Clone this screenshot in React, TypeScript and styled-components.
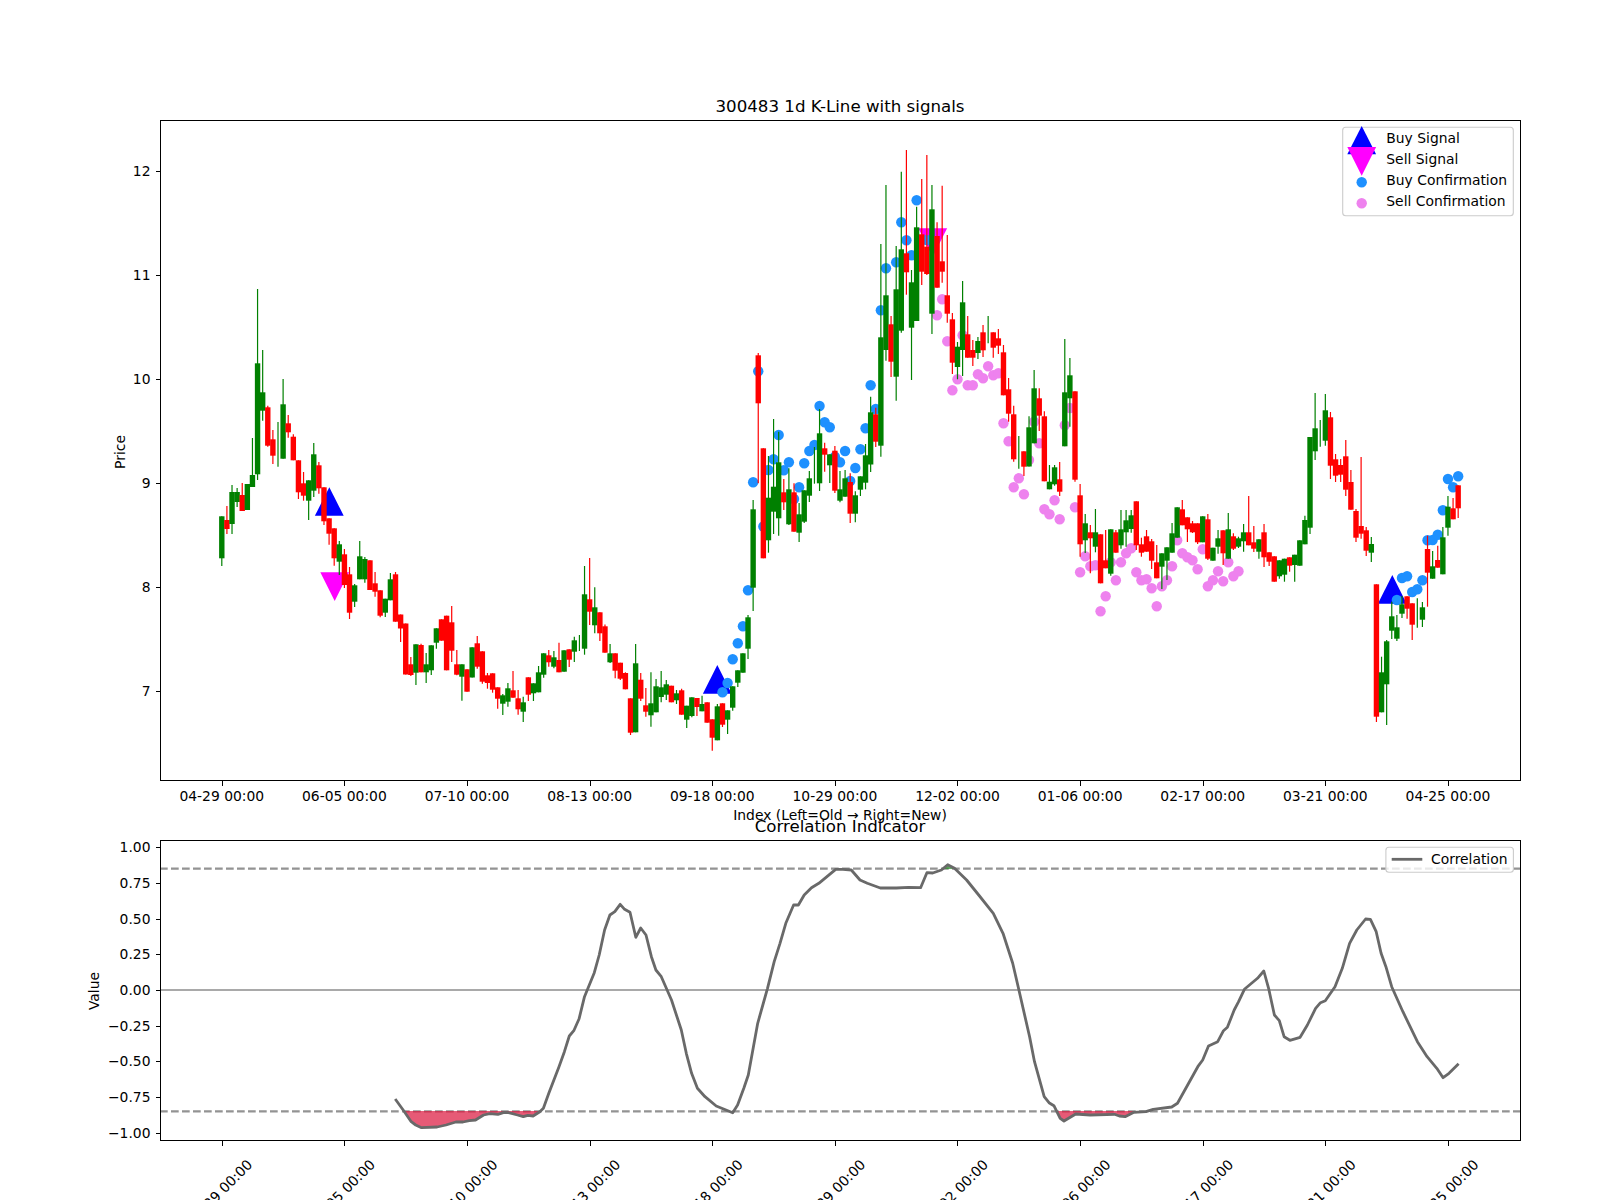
import React from 'react';
import styled, { createGlobalStyle } from 'styled-components';

const GlobalStyle = createGlobalStyle`
  html, body {
    margin: 0;
    padding: 0;
    height: 1200px;
    overflow: hidden;
    background: #ffffff;
  }
`;

const Page = styled.main`
  width: 1600px;
  height: 1200px;
  overflow: hidden;
`;

const Figure = styled.svg`
  display: block;
  width: 1600px;
  height: 1200px;
  font-family: 'DejaVu Sans', 'Liberation Sans', sans-serif;
`;

const Spine = styled.rect`
  fill: none;
  stroke: #000000;
  stroke-width: 1px;
  shape-rendering: crispEdges;
`;

const TickMark = styled.line`
  stroke: #000000;
  stroke-width: 1px;
  shape-rendering: crispEdges;
`;

const Label = styled.text<{ $size?: number; $anchor?: string }>`
  fill: #000000;
  font-size: ${({ $size }) => $size ?? 13.89}px;
  text-anchor: ${({ $anchor }) => $anchor ?? 'middle'};
`;

const Wick = styled.line<{ $tone: string }>`
  stroke: ${({ $tone }) => ($tone === 'r' ? '#ff0000' : '#008000')};
  stroke-width: 1.2px;
`;

const Body = styled.rect<{ $tone: string }>`
  fill: ${({ $tone }) => ($tone === 'r' ? '#ff0000' : '#008000')};
`;

const Dot = styled.circle<{ $kind: 'buy' | 'sell' }>`
  fill: ${({ $kind }) => ($kind === 'buy' ? '#1e90ff' : '#ee82ee')};
`;

const SignalMark = styled.polygon<{ $kind: 'buy' | 'sell' }>`
  fill: ${({ $kind }) => ($kind === 'buy' ? '#0000ff' : '#ff00ff')};
`;

const LegendBox = styled.rect`
  fill: #ffffff;
  fill-opacity: 0.8;
  stroke: #cccccc;
  stroke-width: 1.11px;
`;

const CorrLine = styled.path`
  fill: none;
  stroke: #696969;
  stroke-width: 2.8px;
  stroke-linejoin: round;
`;

const CorrFill = styled.path<{ $tone: string }>`
  fill: ${({ $tone }) => $tone};
  fill-opacity: 0.7;
`;

const LegendLine = styled.line`
  stroke: #696969;
  stroke-width: 2.8px;
`;

const LevelLine = styled.line`
  stroke: #939393;
  stroke-width: 2.08px;
  stroke-dasharray: 7.7 3.3;
`;

const ZeroLine = styled.line`
  stroke: #a9a9a9;
  stroke-width: 2.1px;
`;

const indexX = (i: number) => 221.8 + 5.109 * i;
const priceY = (p: number) => 691.3 - (p - 7) * 104;
const corrY = (v: number) => 990 - 142.8 * v;
const snap = (v: number) => Math.round(v) + 0.5;

// tone, body top, body bottom, wick top, wick bottom (pixel rows read off the chart)
type Candle = [string, number, number, number, number];

const candles: Candle[] = [
  ['g', 516.3, 558.3, 516.3, 566], ['r', 520, 529, 506, 534], ['g', 492, 524, 485, 534], ['g', 492, 502, 488, 507],
  ['r', 495, 511, 483, 511], ['g', 484, 510, 484, 510], ['g', 475, 487, 438, 487], ['g', 363.3, 474.3, 289, 480],
  ['g', 392.3, 410.7, 350, 420.7], ['r', 407.3, 445.7, 405.7, 446.7], ['r', 439.3, 455.7, 430, 464], ['g', 445, 445, 422, 466.7],
  ['g', 404.3, 458.7, 379, 458.7], ['r', 423.3, 432.3, 415, 437.7], ['r', 436.7, 460.3, 434.3, 460.3], ['r', 460.3, 492.3, 460.3, 499],
  ['r', 483.3, 495.7, 472, 500.7], ['g', 480.3, 500.7, 480.3, 520], ['g', 454.3, 490.7, 443, 497], ['r', 465.3, 488.3, 462, 493.7],
  ['r', 487.3, 521.3, 487.3, 525], ['r', 518.3, 533.7, 518.3, 544.7], ['r', 528.3, 558.3, 528.3, 565.7], ['g', 544.3, 561.7, 541, 575],
  ['r', 554.3, 585, 549, 588], ['r', 574.3, 612.7, 567, 619], ['g', 585.3, 601.7, 584, 607], ['g', 556.3, 579.3, 541, 579.3],
  ['g', 559, 579.3, 557, 582.7], ['r', 560.3, 590, 560.3, 590], ['r', 583.3, 591.7, 572, 596.7], ['r', 590.3, 615.7, 590.3, 617.3],
  ['g', 598.7, 612.7, 598.7, 617], ['g', 579.3, 600.3, 573, 600.3], ['r', 574.3, 621.7, 572, 621.7], ['r', 614.5, 628.5, 614.5, 642],
  ['r', 623.5, 674.5, 623.5, 674.5], ['r', 664.3, 675, 657, 676], ['g', 644.3, 672.7, 644.3, 685], ['r', 645, 672.3, 643.7, 672.3],
  ['g', 664.3, 672.3, 653, 683], ['g', 645.3, 670.3, 645.3, 675], ['g', 628.3, 642.7, 628.3, 648.7], ['r', 619.3, 640.7, 619.3, 640.7],
  ['r', 615.7, 670.3, 615.7, 670.3], ['r', 622.3, 650.7, 606, 662], ['r', 664.3, 674.7, 650, 675.3], ['g', 664.3, 676.7, 664.3, 700.7],
  ['r', 669.3, 691.7, 669.3, 691.7], ['g', 647.3, 677.5, 647.3, 677.5], ['r', 643.3, 666.7, 636, 668.7], ['r', 651.3, 681.7, 651.3, 683.7],
  ['r', 675.3, 683, 673, 688.7], ['r', 673.3, 689.7, 673.3, 692.7], ['r', 687.3, 698.7, 687.3, 708.7], ['g', 695.3, 703.7, 694, 715],
  ['g', 688.3, 701.7, 683, 706.7], ['r', 690.3, 697.7, 671, 697.7], ['r', 698.3, 709.3, 690, 714.7], ['g', 702.3, 711.7, 696.7, 722],
  ['r', 677.3, 694.7, 677.3, 701], ['g', 683.3, 693.3, 683.3, 701], ['g', 672.3, 692.3, 666, 692.3], ['g', 653.3, 674.7, 653.3, 677.7],
  ['r', 655.3, 662.3, 650, 666.7], ['g', 657.3, 666.7, 651, 668.3], ['r', 660, 672.3, 642.7, 672.3], ['g', 650.3, 671.7, 650.3, 671.7],
  ['r', 649.3, 659.7, 649.3, 667], ['g', 640.3, 651.7, 636.7, 662], ['g', 645, 645, 635, 651], ['g', 594.3, 648.7, 566, 654.7],
  ['r', 599.3, 611.7, 558, 625], ['g', 607.3, 625.3, 587.3, 633.3], ['r', 612.3, 633.3, 612.3, 641], ['r', 626.3, 652.7, 624.5, 652.7],
  ['g', 653.3, 662.3, 644, 663], ['r', 653.3, 670.7, 653.3, 678.3], ['r', 662.7, 678.7, 662.7, 680], ['r', 673, 689.3, 672.3, 689.3],
  ['r', 698.3, 732.7, 698.3, 735], ['g', 663.3, 732.3, 644, 732.3], ['r', 679.7, 698.7, 673, 701], ['r', 705.3, 711.7, 688, 716.7],
  ['g', 703.3, 715.3, 672.3, 726.7], ['g', 686.3, 712.3, 679, 712.3], ['g', 687.3, 697, 671, 702.3], ['g', 684.3, 694.7, 680, 700],
  ['r', 685.7, 702.3, 685.7, 702.3], ['g', 693.3, 700.3, 690, 704], ['r', 690.3, 714.7, 688.7, 714.7], ['g', 705.7, 719.7, 705.7, 728],
  ['g', 697.3, 716, 697.3, 717.3], ['r', 698, 707, 698, 716], ['g', 704, 711.3, 695.7, 711.3], ['r', 702.3, 722.7, 702.3, 722.7],
  ['r', 719.3, 737.7, 719.3, 750.7], ['g', 706.3, 740.3, 704, 740.3], ['r', 703.3, 724.7, 703.3, 727], ['g', 710.3, 719.7, 710.3, 734],
  ['g', 686.3, 707.7, 686.3, 710.7], ['g', 670.3, 682.7, 670.3, 687], ['g', 653.3, 672.7, 653.3, 672.7], ['g', 617.3, 648.7, 615, 659],
  ['g', 509.3, 587.7, 500, 611], ['r', 355.3, 403.3, 353, 483.3], ['r', 448.3, 558.3, 448.3, 558.3], ['g', 497.7, 540.3, 456, 552.7],
  ['g', 486.7, 511.7, 419, 534], ['g', 462.3, 518.3, 431.7, 535.7], ['r', 492.3, 502.3, 479, 510], ['g', 489.3, 524.3, 468.3, 525],
  ['r', 492.3, 531.7, 483.3, 531.7], ['g', 514.3, 532.7, 503, 542], ['g', 490.3, 521.7, 490.3, 523], ['g', 478.3, 495.7, 471, 502],
  ['g', 465, 465, 447, 483.7], ['g', 433.3, 483.3, 409, 491], ['r', 448.3, 454.7, 442.7, 471.7], ['g', 454.3, 465.3, 454.3, 483],
  ['r', 450.7, 490.7, 446, 493], ['g', 489.3, 500.7, 471, 502.3], ['g', 478.3, 496.7, 470, 496.7], ['r', 482, 513.7, 473.3, 523],
  ['g', 495.3, 513.7, 491.3, 522.3], ['g', 476.3, 489.7, 476.3, 496], ['g', 455.3, 482.7, 444, 489.3], ['g', 412.3, 464.5, 396.7, 472],
  ['r', 414.3, 441.7, 407.7, 447], ['g', 337.3, 445.7, 244, 456.7], ['g', 295.3, 350, 185, 360.7], ['r', 324.3, 361.7, 316, 377],
  ['g', 289.3, 376.7, 246, 400.7], ['g', 249.3, 330.7, 171.7, 332.7], ['r', 253.3, 272.3, 150, 294.7], ['g', 282.3, 327.7, 270, 380],
  ['g', 227.3, 321, 206.7, 321], ['r', 234.3, 271.7, 179, 285], ['r', 246.7, 274, 155, 275], ['g', 209.3, 313.7, 185, 334],
  ['r', 236, 287.7, 222.3, 287.7], ['r', 261.3, 271.7, 185.7, 282.7], ['r', 295.3, 313.7, 235, 322.7], ['r', 319.3, 362.7, 313, 374],
  ['g', 346.7, 367, 342, 379.3], ['g', 302.3, 350, 281, 376], ['r', 334.3, 357.7, 316, 357.7], ['r', 350, 357.7, 340, 366],
  ['g', 341, 353, 337, 359], ['r', 332.3, 350.3, 325, 357], ['g', 330, 330, 316, 343.3], ['r', 332.3, 347.7, 332.3, 357.7],
  ['r', 338.3, 345.7, 329, 354], ['r', 352.3, 395.3, 345, 395.3], ['r', 389.3, 413.7, 378, 421.7], ['r', 414.3, 459.3, 405.7, 461.7],
  ['g', 450, 450, 436, 468.7], ['r', 451.3, 466.7, 451.3, 476], ['g', 427.3, 466.5, 416.3, 466.5], ['g', 388.3, 443.3, 370, 443.3],
  ['r', 398.3, 415.7, 388.3, 431], ['r', 416.3, 481.3, 411.3, 481.3], ['g', 481.7, 489.3, 465, 489.3], ['g', 467.3, 484.3, 465, 485.7],
  ['r', 479.3, 491.7, 462, 496], ['g', 392.3, 446.3, 339, 446.3], ['g', 375.3, 398.3, 358, 426.7], ['r', 391.3, 479.7, 391.3, 481.7],
  ['r', 495.3, 544.3, 484, 556.7], ['g', 523.3, 540.3, 514, 553], ['r', 532.3, 538.3, 525, 573.3], ['g', 532.3, 546.7, 509, 552.3],
  ['r', 534.3, 583.3, 534.3, 583.3], ['r', 560.3, 568.3, 530, 568.3], ['g', 529.3, 573.7, 529.3, 575.7], ['r', 532.3, 552.7, 530, 552.7],
  ['g', 529.3, 545.3, 510, 548.7], ['g', 520.3, 532.3, 510, 546.7], ['g', 515.3, 529, 510, 532.7], ['r', 501.3, 545.3, 501.3, 550],
  ['r', 544.3, 552.7, 537.7, 556.7], ['r', 536.3, 551.7, 530, 551.7], ['r', 541.3, 560.7, 539, 569], ['r', 562.3, 578.3, 545, 578.3],
  ['g', 553.3, 566.7, 553.3, 589], ['g', 547.3, 560.7, 547.3, 580], ['g', 533.3, 552.7, 523, 552.7], ['g', 507.3, 537.7, 507.3, 537.7],
  ['r', 509.3, 525.3, 500, 525.3], ['r', 517.3, 529.3, 517.3, 542], ['r', 523.3, 532.3, 521, 533], ['r', 523.3, 542.3, 523.3, 544],
  ['g', 516.3, 542.3, 516.3, 542.3], ['r', 519.3, 558.7, 514, 560], ['g', 547.7, 560.7, 547.7, 560.7], ['g', 538.3, 546.7, 530, 553.7],
  ['r', 530.3, 553.3, 530.3, 565], ['g', 529.3, 558.7, 513, 558.7], ['r', 536.3, 548.7, 533.3, 550], ['g', 538.3, 546.7, 536.7, 548],
  ['g', 532.3, 541.3, 524, 551.7], ['r', 532.3, 545.3, 496, 545.3], ['r', 542.3, 548.7, 526, 552], ['g', 539.3, 551.7, 539.3, 558.7],
  ['r', 532.3, 557.3, 524, 567], ['r', 552.3, 561.7, 552.3, 566], ['r', 556.3, 581.7, 556.3, 581.7], ['g', 560.3, 576.3, 560.3, 578.7],
  ['g', 558.7, 574.7, 558.7, 581.7], ['r', 557.3, 565.7, 557.3, 571.7], ['g', 554.7, 565, 554.7, 581.7], ['g', 540.3, 565.7, 540.3, 565.7],
  ['g', 520, 544.3, 515.7, 544.3], ['g', 437, 527.7, 437, 534], ['g', 428.3, 451.3, 393, 460], ['g', 435, 435, 420, 446.7],
  ['g', 410.3, 440.7, 394, 445.7], ['r', 417.3, 465.7, 412, 479], ['r', 459.3, 475.7, 454, 482], ['r', 465, 474.7, 459, 482],
  ['r', 456.3, 489.7, 440, 496], ['r', 482, 509.7, 470, 509.7], ['r', 511, 537.7, 509, 542], ['r', 526, 533.7, 457, 538.7],
  ['r', 530.3, 550.7, 527, 556], ['g', 544, 552.7, 537, 562], ['r', 584.3, 716.7, 584.3, 722], ['g', 672.3, 712.3, 656.7, 712.3],
  ['g', 641.3, 684.3, 640, 725], ['g', 616.3, 630.7, 601.7, 639], ['g', 627.3, 638.7, 615, 641], ['g', 604.3, 613.7, 596, 618],
  ['r', 596.3, 608.7, 596.3, 618.7], ['r', 603.3, 624.7, 603.3, 640], ['g', 610, 610, 598.3, 627.7], ['g', 607.3, 619.7, 602, 627],
  ['r', 549, 572.7, 535.7, 606.7], ['g', 566.3, 578.7, 551, 578.7], ['r', 560, 567.7, 545.7, 567.7], ['g', 537.3, 574.3, 527, 574.3],
  ['g', 506.7, 527.7, 496, 535.7], ['r', 508.3, 519.3, 498, 519.3], ['r', 485.3, 508.3, 485.3, 518],
];

const buyDots: [number, number][] = [
  [98, 692.3], [99, 683], [100, 659.3], [101, 643.3], [102, 626.3], [103, 590.3], [104, 482.3], [105, 371.3], [106, 526.5], [107, 470],
  [108, 459.3], [109, 435], [110, 470.3], [111, 462.3], [112, 499], [113, 487.3], [114, 463.3], [115, 451], [116, 445],
  [117, 406], [118, 422.3], [119, 427.3], [120, 456.7], [121, 462.3], [122, 451], [123, 481], [124, 468], [125, 449.3],
  [126, 428.3], [127, 385.3], [128, 409], [129, 310.3], [130, 268.3], [132, 262.3], [133, 222.3], [134, 240.3], [135, 255.3],
  [136, 200.3], [138, 240], [230, 600], [231, 578], [232, 576.3], [233, 592], [234, 589.3], [235, 580.3], [236, 540.3],
  [237, 540], [238, 534.7], [239, 510.3], [240, 479], [241, 487.3], [242, 476.3],
];

const sellDots: [number, number][] = [
  [140, 315.3], [141, 299.3], [142, 341.3], [143, 390.3], [144, 379.3], [145, 335.3], [146, 385.3], [147, 385.3], [148, 374.3],
  [149, 378.3], [150, 366.3], [151, 375.3], [152, 373.3], [153, 423.3], [154, 441.3], [155, 487.3], [156, 478.3], [157, 494.2],
  [158, 460], [159, 421.7], [160, 443.3], [161, 509.3], [162, 514.3], [163, 500.3], [164, 519.3], [165, 425.3], [166, 408],
  [167, 507.3], [168, 572.3], [169, 556.3], [170, 566.3], [171, 565.3], [172, 611.3], [173, 596.3], [174, 562.3], [175, 580.3],
  [176, 562.3], [177, 553.3], [178, 548.3], [179, 572.3], [180, 580.3], [181, 579.3], [182, 588.3], [183, 606.3], [184, 586.3],
  [185, 580.3], [186, 566.3], [187, 540.3], [188, 553.3], [189, 557.3], [190, 560.3], [191, 569.3], [192, 549.3], [193, 586.3],
  [194, 580.3], [195, 571.3], [196, 581.3], [197, 562.3], [198, 576.3], [199, 571.3],
];

// apex x, base row, apex row of each signal marker
const buySignals = [[329.3, 515.7, 487.3], [717.3, 693.7, 665], [1392.3, 603.7, 575]];
const sellSignals = [[334.7, 572.3, 601], [932.7, 228.3, 257]];

const corrPoints: [number, number][] = [
  [395.2, 1099], [403.7, 1110.7], [411.2, 1121.7], [415.7, 1125], [421.5, 1127.7], [437.1, 1127], [446, 1125], [455.9, 1122],
  [463, 1122], [469.3, 1120.7], [475.5, 1120], [483.6, 1115], [489.8, 1113.7], [497.9, 1114.3], [504.1, 1112.3], [508.6, 1112.7],
  [517.5, 1115], [523.3, 1116.7], [527.8, 1115.3], [533.1, 1116], [539.8, 1111.7], [543.4, 1108.3], [548.8, 1093.3], [559, 1066.7],
  [564.4, 1051.7], [569.3, 1036], [573.8, 1030.7], [579.1, 1018.7], [584.5, 996.7], [594.3, 972.7], [599.2, 955], [604.6, 930],
  [609.9, 915], [614.8, 911.7], [620.2, 904.3], [624.6, 909.3], [630, 912.3], [635.8, 937.3], [640.7, 928], [646, 935],
  [651.4, 956.7], [655.9, 970], [661.3, 976.7], [671.5, 1000], [681.3, 1030], [686.3, 1053.3], [691.6, 1073.3], [697.4, 1088.3],
  [705, 1096.7], [716.2, 1106], [732.7, 1112.7], [737.6, 1105], [743.8, 1088.3], [748.3, 1075], [757.7, 1023.3], [767.5, 988.3],
  [774.2, 961.7], [780, 943.3], [785.8, 923.3], [793.6, 905], [798.4, 905], [804.2, 895], [811.5, 887.7], [818.8, 883.3],
  [835.7, 869.3], [843, 869.3], [851.3, 870], [860, 880], [867.3, 883.3], [880.3, 888], [896.3, 888], [908.5, 887.3],
  [920.6, 887.7], [926.9, 872.7], [932.7, 873], [941.4, 870], [947.7, 864.7], [954.5, 868.3], [966.6, 880], [978.7, 895],
  [993.3, 913.3], [1003, 933.3], [1012.7, 963.3], [1018.5, 988.3], [1029.6, 1036.7], [1034.5, 1061.7], [1044.2, 1096.7], [1049, 1102.7],
  [1053.9, 1105.7], [1060.2, 1118.3], [1064, 1121], [1075.7, 1114], [1090.2, 1115], [1114.5, 1114.3], [1119.3, 1116], [1125.1, 1116.7],
  [1133.9, 1112.3], [1146, 1111.7], [1153.2, 1109.3], [1171.7, 1107], [1177.5, 1103.3], [1197.8, 1066.7], [1202.7, 1060], [1208.5, 1046],
  [1217.7, 1041.7], [1223.5, 1030.7], [1227.4, 1027.3], [1234.2, 1010], [1238.6, 1001.7], [1244.4, 989.3], [1257.5, 978.3], [1263.8, 971],
  [1268.6, 988.3], [1274.4, 1015], [1279.3, 1020.7], [1284.1, 1036.7], [1289.9, 1040.3], [1300.1, 1037.3], [1307.4, 1025], [1315.6, 1008.3],
  [1320.5, 1002.7], [1325.3, 1000.7], [1335, 986.7], [1342.3, 968.3], [1349.6, 943.3], [1356.8, 930], [1365.6, 919], [1370.4, 919.3],
  [1376.2, 931.7], [1381.1, 953.3], [1385.9, 966.7], [1391.7, 986.7], [1402.9, 1011.7], [1417.4, 1041.7], [1427.1, 1056.7], [1436.8, 1068.3],
  [1443.1, 1077.7], [1449, 1073.3], [1458.6, 1063.7],
];

const dateLabels = [
  '04-29 00:00', '06-05 00:00', '07-10 00:00', '08-13 00:00', '09-18 00:00', '10-29 00:00',
  '12-02 00:00', '01-06 00:00', '02-17 00:00', '03-21 00:00', '04-25 00:00',
];
const priceTicks = [7, 8, 9, 10, 11, 12];
const corrTicks = [1, 0.75, 0.5, 0.25, 0, -0.25, -0.5, -0.75, -1];

const corrPath = corrPoints.map(([x, y], i) => `${i ? 'L' : 'M'}${x} ${y}`).join(' ');
const firstX = corrPoints[0][0];
const lastX = corrPoints[corrPoints.length - 1][0];
const areaTo = (row: number) => `M${firstX} ${row} ${corrPath.replace('M', 'L')} L${lastX} ${row} Z`;

const tri = (x: number, base: number, apex: number) =>
  `${x - 14.4},${base} ${x + 14.4},${base} ${x},${apex}`;

const formatTick = (v: number) => (v < 0 ? `\u2212${(-v).toFixed(2)}` : v.toFixed(2));

export default function App() {
  return (
    <Page>
      <GlobalStyle />
      <Figure viewBox="0 0 1600 1200">
        <defs>
          <clipPath id="below-level">
            <rect x="160" y="1111" width="1360" height="29" />
          </clipPath>
          <clipPath id="above-level">
            <rect x="160" y="840" width="1360" height="29" />
          </clipPath>
        </defs>

        {/* price panel */}
        <Label x="840" y="111.5" $size={16.67}>
          300483 1d K-Line with signals
        </Label>

        {buySignals.map(([x, base, apex]) => (
          <SignalMark key={x} $kind="buy" points={tri(x, base, apex)} />
        ))}
        {sellSignals.map(([x, base, apex]) => (
          <SignalMark key={x} $kind="sell" points={tri(x, base, apex)} />
        ))}
        {buyDots.map(([i, y]) => (
          <Dot key={i} $kind="buy" cx={indexX(i)} cy={y} r="5.2" />
        ))}
        {sellDots.map(([i, y]) => (
          <Dot key={i} $kind="sell" cx={indexX(i)} cy={y} r="5.2" />
        ))}

        {candles.map(([tone, top, bottom, wickTop, wickBottom], i) => (
          <g key={i}>
            <Wick $tone={tone} x1={indexX(i)} x2={indexX(i)} y1={wickTop} y2={wickBottom} />
            <Body $tone={tone} x={indexX(i) - 2.7} y={top} width="5.4" height={bottom - top} />
          </g>
        ))}

        <Spine x="160.5" y="120.5" width="1360" height="660" />
        {priceTicks.map((p) => (
          <g key={p}>
            <TickMark x1="155.5" x2="160.5" y1={snap(priceY(p))} y2={snap(priceY(p))} />
            <Label x="150.5" y={priceY(p) + 5} $anchor="end">
              {p}
            </Label>
          </g>
        ))}
        {dateLabels.map((d, k) => (
          <g key={d}>
            <TickMark x1={snap(indexX(k * 24))} x2={snap(indexX(k * 24))} y1="780.5" y2="785.5" />
            <Label x={indexX(k * 24)} y="801">
              {d}
            </Label>
          </g>
        ))}
        <Label x="840" y="820">
          Index (Left=Old → Right=New)
        </Label>
        <Label transform="translate(124.5 452) rotate(-90)">Price</Label>

        <LegendBox x="1342.7" y="127.3" width="170.6" height="88.4" rx="3" />
        <SignalMark $kind="buy" points={tri(1361.7, 154.3, 126)} />
        <SignalMark $kind="sell" points={tri(1361.7, 147, 175.7)} />
        <Dot $kind="buy" cx="1361.7" cy="182.3" r="5.2" />
        <Dot $kind="sell" cx="1361.7" cy="203.3" r="5.2" />
        <Label x="1386.3" y="143.3" $anchor="start">
          Buy Signal
        </Label>
        <Label x="1386.3" y="164.3" $anchor="start">
          Sell Signal
        </Label>
        <Label x="1386.3" y="185.3" $anchor="start">
          Buy Confirmation
        </Label>
        <Label x="1386.3" y="206.3" $anchor="start">
          Sell Confirmation
        </Label>

        {/* correlation panel */}
        <Label x="840" y="832" $size={16.67}>
          Correlation Indicator
        </Label>
        <LevelLine x1="160" x2="1520" y1={corrY(0.85)} y2={corrY(0.85)} />
        <LevelLine x1="160" x2="1520" y1={corrY(-0.85)} y2={corrY(-0.85)} />
        <ZeroLine x1="160" x2="1520" y1={corrY(0)} y2={corrY(0)} />
        <CorrFill $tone="#dc143c" d={areaTo(1111)} clipPath="url(#below-level)" />
        <CorrFill $tone="#228b22" d={areaTo(869)} clipPath="url(#above-level)" />
        <CorrLine d={corrPath} />

        <Spine x="160.5" y="840.5" width="1360" height="300" />
        {corrTicks.map((v) => (
          <g key={v}>
            <TickMark x1="155.5" x2="160.5" y1={snap(corrY(v))} y2={snap(corrY(v))} />
            <Label x="150.5" y={corrY(v) + 5} $anchor="end">
              {formatTick(v)}
            </Label>
          </g>
        ))}
        {dateLabels.map((d, k) => (
          <g key={d}>
            <TickMark x1={snap(indexX(k * 24))} x2={snap(indexX(k * 24))} y1="1140.5" y2="1145.5" />
            <Label transform={`translate(${indexX(k * 24) - 2} 1192) rotate(-45)`} y="5">
              {d}
            </Label>
          </g>
        ))}
        <Label transform="translate(98.5 991) rotate(-90)">Value</Label>

        <LegendBox x="1385.9" y="847.3" width="127.5" height="25" rx="3" />
        <LegendLine x1="1391.7" x2="1422.3" y1="859.3" y2="859.3" />
        <Label x="1431" y="864.3" $anchor="start">
          Correlation
        </Label>
      </Figure>
    </Page>
  );
}
